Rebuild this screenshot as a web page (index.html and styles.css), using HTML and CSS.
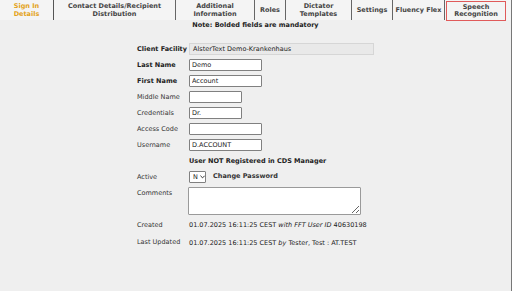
FILE: index.html
```html
<!DOCTYPE html>
<html lang="en">
<head>
  <meta charset="UTF-8" />
  <title>Sign In Details</title>
  <link rel="stylesheet" href="styles.css">
</head>
<body>
  <div class="frame">
    <nav class="tabs">
      <a href="#" class="tab active w-signin">Sign In<br>Details</a>
      <a href="#" class="tab w-contact">Contact Details/Recipient<br>Distribution</a>
      <a href="#" class="tab w-additional">Additional<br>Information</a>
      <a href="#" class="tab w-roles">Roles</a>
      <a href="#" class="tab w-dictator">Dictator<br>Templates</a>
      <a href="#" class="tab w-settings">Settings</a>
      <a href="#" class="tab w-fluency">Fluency Flex</a>
      <div class="tab-slot">
        <a href="#" class="tab highlighted">Speech<br>Recognition</a>
      </div>
    </nav>

    <main class="content">
      <p class="note">Note: Bolded fields are mandatory</p>

      <form class="user-form">
        <label class="required">Client Facility</label>
        <div class="readonly">AlsterText Demo-Krankenhaus</div>

        <label class="required">Last Name</label>
        <input type="text" class="field" value="Demo" />

        <label class="required">First Name</label>
        <input type="text" class="field" value="Account" />

        <label>Middle Name</label>
        <input type="text" class="field short" value="" />

        <label>Credentials</label>
        <input type="text" class="field short" value="Dr." />

        <label>Access Code</label>
        <input type="text" class="field" value="" />

        <label>Username</label>
        <input type="text" class="field" value="D.ACCOUNT" />

        <div></div>
        <div class="status">User NOT Registered in CDS Manager</div>

        <label>Active</label>
        <div class="active-row">
          <div class="select">N <svg width="6" height="4" viewBox="0 0 6 4"><path d="M0.5 0.5 L3 3 L5.5 0.5" fill="none" stroke="#222" stroke-width="1.1"/></svg></div>
          <a href="#" class="link">Change Password</a>
        </div>

        <label class="top">Comments</label>
        <textarea class="comments"></textarea>

        <label>Created</label>
        <div class="info">01.07.2025 16:11:25 CEST <em>with FFT User ID</em> 40630198</div>

        <label>Last Updated</label>
        <div class="info">01.07.2025 16:11:25 CEST <em>by</em> Tester, Test : AT.TEST</div>
      </form>
    </main>
  </div>
</body>
</html>
```

FILE: styles.css
```css
body {
  margin: 0;
  padding: 0;
  background: white;
  font-family: "DejaVu Sans", Verdana, sans-serif;
  font-size: 6.5px;
  color: #222;
}

.frame {
  width: 511px;
  height: 291px;
  border-right: 1px solid #777;
  background: #efefef;
  box-sizing: content-box;
}

.tabs {
  display: flex;
  height: 20px;
  background: #f4f4f4;
}

.tab {
  display: flex;
  align-items: center;
  justify-content: center;
  text-align: center;
  text-decoration: none;
  font-weight: bold;
  line-height: 8px;
  color: #444;
  box-sizing: border-box;
  height: 20px;
  border-right: 1px solid #666;
}

.tab.active {
  color: #e3a21a;
}

.w-signin { width: 54px; border-right-color: #555; }
.w-contact { width: 122px; }
.w-additional { width: 79px; }
.w-roles { width: 31px; }
.w-dictator { width: 66px; }
.w-settings { width: 41px; }
.w-fluency { width: 52px; }

.tab-slot {
  flex: 1;
  display: flex;
  padding-left: 1px;
}

.tab.highlighted {
  width: 60px;
  height: 20px;
  margin-top: 1px;
  border: 1px solid #e05a5a;
  line-height: 7.5px;
}

.content {
  padding-top: 1px;
}

.note {
  margin: 0;
  text-align: center;
  font-weight: bold;
  line-height: 8px;
}

.user-form {
  width: 237px;
  margin: 14px auto 0;
  display: grid;
  grid-template-columns: 52px 1fr;
  grid-auto-rows: minmax(12px, auto);
  row-gap: 4px;
  align-items: center;
}

.user-form label {
  color: #333;
  white-space: nowrap;
}

.user-form label.required {
  font-weight: bold;
  color: #222;
}

.user-form label.top {
  align-self: start;
  padding-top: 2px;
}

.readonly {
  height: 12px;
  line-height: 11px;
  padding: 0 3px;
  border: 1px solid #d6d6d6;
  background: #e9e9e9;
  box-sizing: border-box;
}

.field {
  width: 73px;
  height: 12px;
  padding: 0 2px;
  border: 1px solid #808080;
  border-radius: 1px;
  background: white;
  font-family: inherit;
  font-size: 6.5px;
  color: #222;
  box-sizing: border-box;
  outline: none;
}

.field.short {
  width: 53px;
}

.status {
  font-weight: bold;
  line-height: 12px;
}

.active-row {
  display: flex;
  align-items: center;
  gap: 7px;
}

.select {
  display: flex;
  align-items: center;
  gap: 2px;
  width: 17px;
  height: 12px;
  padding-left: 3px;
  border: 1px solid #808080;
  border-radius: 1px;
  background: white;
  box-sizing: border-box;
}

.link {
  color: #333;
  font-weight: bold;
  text-decoration: none;
  margin-top: -2px;
}

.comments {
  width: 173px;
  height: 28px;
  margin: 0 0 0 -1px;
  border: 1px solid #9a9a9a;
  border-radius: 1px;
  background: white;
  box-sizing: border-box;
  resize: vertical;
  padding: 0;
}

.info {
  line-height: 12px;
}

.info em {
  font-style: italic;
}

.user-form .info:last-child {
  margin-top: 2px;
}
```
